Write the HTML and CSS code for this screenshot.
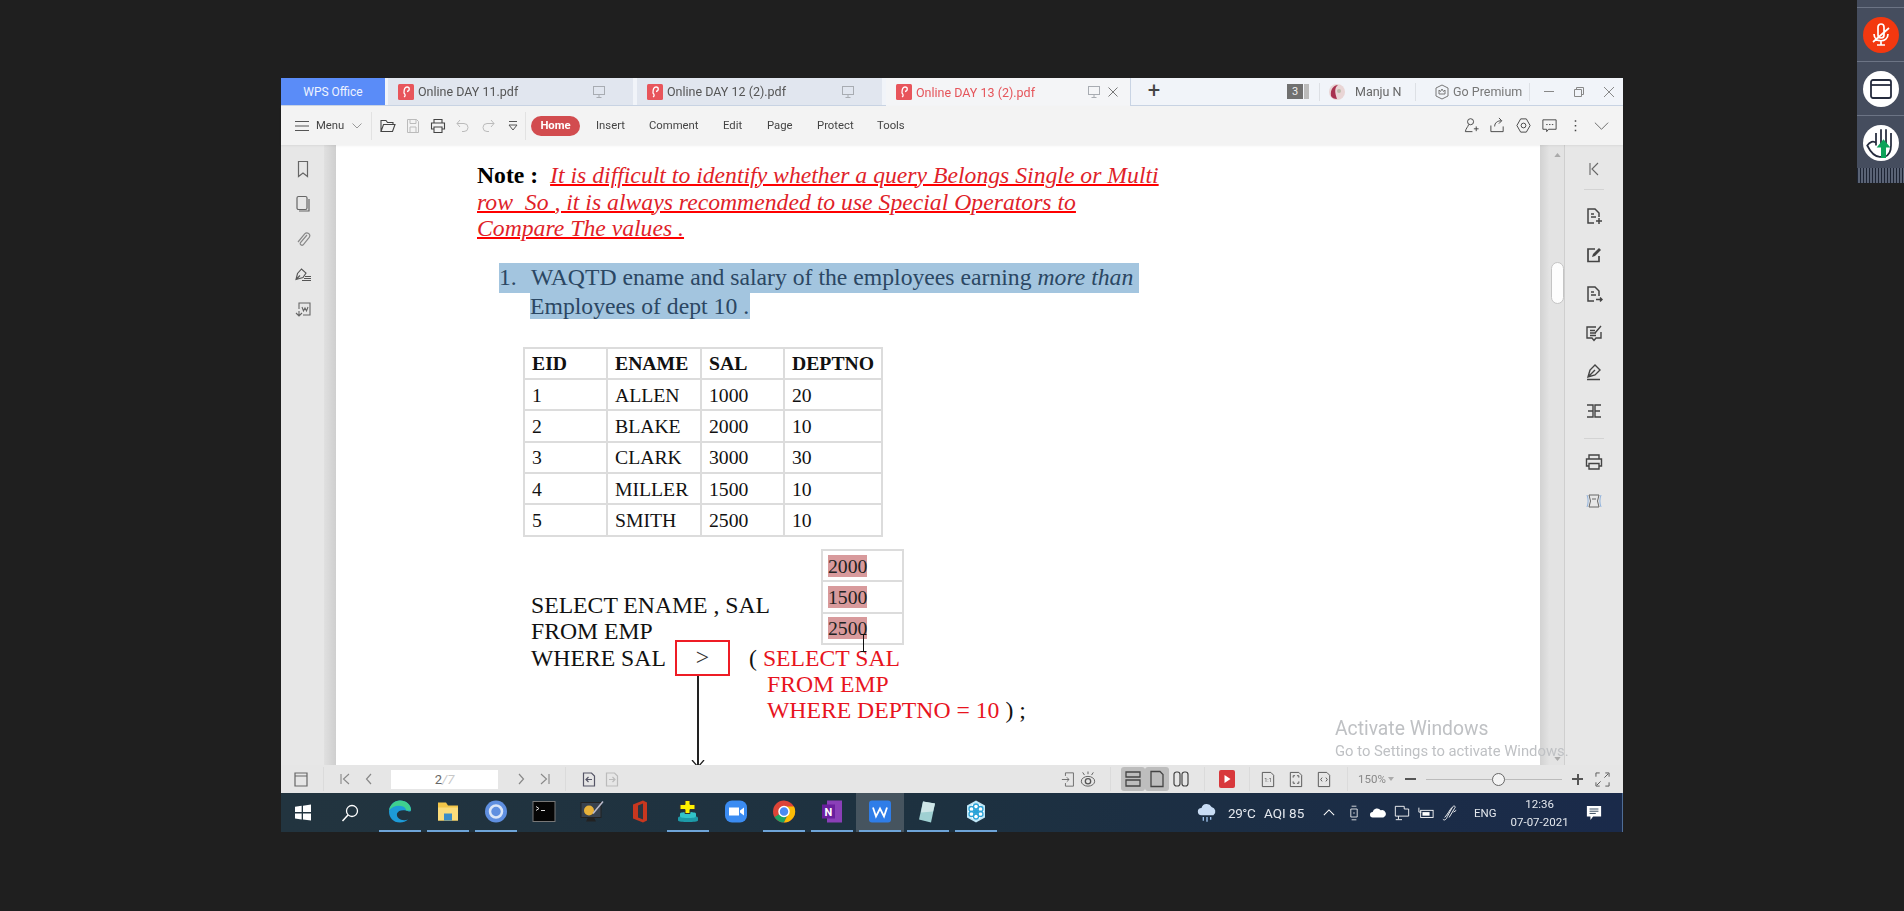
FILE: index.html
```html
<!DOCTYPE html>
<html lang="en">
<head>
  <meta charset="UTF-8" />
  <title>Online DAY 13 (2).pdf - WPS Office</title>
  <link rel="stylesheet" href="styles.css">
</head>
<body>
  <svg class="defs" width="0" height="0">
    <symbol id="pdf" viewBox="0 0 16 16"><rect width="16" height="16" rx="1.5" fill="#e8555b"/><path d="M6 13c2-1 1-3 0-4 0-3 0-6 3-6 3 0 3 4 0 4.500" fill="none" stroke="#fff" stroke-width="1.300"/></symbol>
    <symbol id="mon" viewBox="0 0 14 14"><rect x="1.500" y="1.500" width="11" height="8" fill="none" stroke="currentColor"/><path d="M7 10v2.500M4.500 12.500h5" stroke="currentColor"/></symbol>
    <symbol id="chev-l" viewBox="0 0 14 14"><path d="M9 2L4.500 7 9 12" fill="none" stroke="currentColor" stroke-width="1.200"/></symbol>
    <symbol id="chev-r" viewBox="0 0 14 14"><path d="M5 2l4.500 5L5 12" fill="none" stroke="currentColor" stroke-width="1.200"/></symbol>
    <symbol id="chev-first" viewBox="0 0 14 14"><path d="M3 2v10M11 2L5.500 7l5.500 5" fill="none" stroke="currentColor" stroke-width="1.100"/></symbol>
    <symbol id="chev-last" viewBox="0 0 14 14"><path d="M11 2v10M3 2l5.500 5L3 12" fill="none" stroke="currentColor" stroke-width="1.100"/></symbol>
  </svg>

  <main class="window">
    <div class="tabbar">
      <div class="tab-home">WPS Office</div>
      <div class="tab">
        <svg class="tab-pdf"><use href="#pdf"/></svg><span class="tab-name">Online DAY 11.pdf</span>
        <svg class="tab-mon"><use href="#mon"/></svg>
      </div>
      <div class="tab">
        <svg class="tab-pdf"><use href="#pdf"/></svg><span class="tab-name">Online DAY 12 (2).pdf</span>
        <svg class="tab-mon"><use href="#mon"/></svg>
      </div>
      <div class="tab tab-active">
        <svg class="tab-pdf"><use href="#pdf"/></svg><span class="tab-name">Online DAY 13 (2).pdf</span>
        <svg class="tab-mon"><use href="#mon"/></svg>
        <svg class="tab-close" viewBox="0 0 12 12"><path d="M1.500 1.500l9 9M10.500 1.500l-9 9" stroke="currentColor"/></svg>
      </div>
      <div class="tab-plus">+</div>
      <div class="tabbar-right">
        <span class="count">3</span>
        <span class="count-edge"></span>
        <span class="vsep"></span>
        <svg class="avatar" viewBox="0 0 16 16"><circle cx="8" cy="8" r="8" fill="#e9d5d5"/><path d="M2 12C1 5 5 1 9 1 5 4 6 9 8 15 5 15 3 14 2 12z" fill="#a8324f"/><circle cx="10" cy="7" r="2" fill="#bba"/></svg>
        <span class="user">Manju N</span>
        <span class="vsep vsep-user"></span>
        <svg class="crown" viewBox="0 0 16 16"><path d="M8 1l6 3v8l-6 3-6-3V4z" fill="none" stroke="#777"/><path d="M5 10V6l1.500 1.500L8 5l1.500 2.500L11 6v4z" fill="none" stroke="#777"/></svg>
        <span class="premium">Go Premium</span>
        <span class="vsep vsep-prem"></span>
        <span class="win-min"></span>
        <svg class="win-max" viewBox="0 0 12 12"><path d="M1.500 3.500h7v7h-7zM3.500 3.500v-2h7v7h-2" fill="none" stroke="#888"/></svg>
        <svg class="win-close" viewBox="0 0 12 12"><path d="M1 1l10 10M11 1L1 11" stroke="#888"/></svg>
      </div>
    </div>

    <div class="toolbar">
      <svg class="menu-ico" viewBox="0 0 14 12"><path d="M0 1.500h14M0 6h14M0 10.500h14" stroke="#555" stroke-width="1.200"/></svg>
      <span class="menu-label">Menu</span>
      <svg class="menu-chev" viewBox="0 0 10 6"><path d="M.5.500L5 5 9.500.5" fill="none" stroke="#999"/></svg>
      <span class="tool-sep"></span>
      <div class="quick">
        <svg viewBox="0 0 16 16"><path d="M1 13.500v-11h5l1.500 2H13v2M1 13.500h11.500L15 6.500H3.500z" fill="none" stroke="#444" stroke-width="1.100"/></svg>
        <svg viewBox="0 0 16 16"><path d="M2.500 1.500h9l2 2v11h-11zM5 1.500v4h6v-4M5 14v-5h6v5" fill="none" stroke="#bbb"/></svg>
        <svg viewBox="0 0 16 16"><path d="M4 5V1.500h8V5M4 11H1.500V5h13v6H12M4 9h8v5.500H4z" fill="none" stroke="#444" stroke-width="1.100"/></svg>
        <svg viewBox="0 0 16 16"><path d="M5 2L2 5.500 5 9M2 5.500h7a3.500 3.500 0 0 1 0 8H7" fill="none" stroke="#bbb"/></svg>
        <svg viewBox="0 0 16 16"><path d="M11 2l3 3.500L11 9M14 5.500H7a3.500 3.500 0 0 0 0 8h2" fill="none" stroke="#bbb"/></svg>
        <svg viewBox="0 0 16 16"><path d="M4 3.500h8M4 7l4 5 4-5z" fill="none" stroke="#555"/></svg>
      </div>
      <span class="tool-sep tool-sep-b"></span>
      <nav class="ribbon">
        <span class="rib-home">Home</span>
        <span class="rib rib-insert">Insert</span>
        <span class="rib rib-comment">Comment</span>
        <span class="rib rib-edit">Edit</span>
        <span class="rib rib-page">Page</span>
        <span class="rib rib-protect">Protect</span>
        <span class="rib rib-tools">Tools</span>
      </nav>
      <div class="tool-right">
        <svg viewBox="0 0 18 18"><circle cx="8" cy="5" r="3.200" fill="none" stroke="#444"/><path d="M6 8c-1 3-3 4-3.500 7.500H10M14 10v5M11.500 12.500h5" fill="none" stroke="#444"/></svg>
        <svg viewBox="0 0 18 18"><path d="M2 9v6.500h13V10M6 10c0-4 3-6 7-6M10.500 1l3 3-3 3" fill="none" stroke="#444"/></svg>
        <svg viewBox="0 0 18 18"><path d="M6 2h6l4 7-4 7H6L2 9z" fill="none" stroke="#444"/><circle cx="9" cy="9" r="2.500" fill="none" stroke="#444"/></svg>
        <svg viewBox="0 0 18 18"><path d="M2 3h14v10H8l-2 2.500V13H2z" fill="none" stroke="#444"/><path d="M5.500 8h1.500M8.500 8H10M11.500 8H13" stroke="#444"/></svg>
        <svg viewBox="0 0 18 18"><path d="M9 3.500v1.500M9 8.500V10M9 13.500V15" stroke="#444" stroke-width="1.600"/></svg>
        <svg viewBox="0 0 18 18"><path d="M2 6l7 7 7-7" fill="none" stroke="#666"/></svg>
      </div>
    </div>

    <div class="workspace">
      <aside class="side-left">
        <svg viewBox="0 0 16 18"><path d="M3.500 1.500h9v15L8 13l-4.500 3.500z" fill="none" stroke="#666" stroke-width="1.200"/></svg>
        <svg viewBox="0 0 16 18"><rect x="2" y="1.500" width="10" height="13" rx="1.500" fill="none" stroke="#666" stroke-width="1.200"/><path d="M14 4v12H4" fill="none" stroke="#666" stroke-width="1.200"/></svg>
        <svg viewBox="0 0 16 18"><path d="M12 5L5.500 12.500a1.800 1.800 0 0 0 2.700 2.300l6-7.500c2-3-2-6-4.500-3.500L3 12" fill="none" stroke="#888" stroke-width="1.200"/></svg>
        <svg viewBox="0 0 16 18"><path d="M1 14.500l1.500-6L6.500 4l4.500 4-3 4.500zM1 14.500l4-4M10 11.500h6M9 13.500h7M7 15.500h9" fill="none" stroke="#555" stroke-width="1.100"/></svg>
        <svg viewBox="0 0 16 18"><path d="M4 9V3h11v12H8M1 13l3 3 3-3M4 16v-5M7 7l1.500 4L10 8l1.500 3L13 7" fill="none" stroke="#666" stroke-width="1.100"/></svg>
      </aside>
      <div class="gutter-left"></div>

      <section class="page">
        <p class="note"><b>Note :</b> <u>It is difficult to identify whether a query Belongs Single or Multi<br>row&nbsp; So , it is always recommended to use Special Operators to<br>Compare The values .</u></p>

        <div class="selection">
          <div class="sel-line sel-first"><span class="sel-num">1.</span><span>WAQTD ename and salary of the employees earning <i>more than</i></span></div>
          <div class="sel-line sel-second">Employees of dept 10 .</div>
        </div>

        <table class="emp">
          <thead>
            <tr><th>EID</th><th>ENAME</th><th>SAL</th><th>DEPTNO</th></tr>
          </thead>
          <tbody>
            <tr><td>1</td><td>ALLEN</td><td>1000</td><td>20</td></tr>
            <tr><td>2</td><td>BLAKE</td><td>2000</td><td>10</td></tr>
            <tr><td>3</td><td>CLARK</td><td>3000</td><td>30</td></tr>
            <tr><td>4</td><td>MILLER</td><td>1500</td><td>10</td></tr>
            <tr><td>5</td><td>SMITH</td><td>2500</td><td>10</td></tr>
          </tbody>
        </table>

        <div class="sql">
          <div class="query">
            <div>SELECT ENAME , SAL</div>
            <div>FROM EMP</div>
            <div class="where-row">
              <span class="where">WHERE SAL</span>
              <span class="op">&gt;
                <span class="op-arrow">
                  <svg class="op-head" viewBox="0 0 14 8"><path d="M1 0l6 7 6-7" fill="none" stroke="#222" stroke-width="1.300"/></svg>
                </span>
              </span>
              <span class="paren">(</span>
              <span class="red sub-first">SELECT SAL</span>
            </div>
            <div class="red sub">FROM EMP</div>
            <div class="sub"><span class="red">WHERE DEPTNO = 10</span> ) ;</div>
          </div>
          <table class="sal">
            <tr><td><mark>2000</mark></td></tr>
            <tr><td><mark>1500</mark></td></tr>
            <tr><td><mark>2500</mark></td></tr>
          </table>
        </div>
        <svg class="ibeam" viewBox="0 0 7 18"><path d="M.5.500h6M3.500.5v17M.5 17.500h6" stroke="#111"/></svg>
      </section>

      <div class="gutter-right">
        <svg class="scroll-up" viewBox="0 0 8 5"><path d="M4 0l4 5H0z" fill="#aaa"/></svg>
        <div class="thumb"></div>
        <svg class="scroll-down" viewBox="0 0 8 5"><path d="M4 5l4-5H0z" fill="#aaa"/></svg>
      </div>
      <aside class="side-right">
        <svg class="r-collapse" viewBox="0 0 18 18"><path d="M5 3v12M13 3L7 9l6 6" fill="none" stroke="#666" stroke-width="1.100"/></svg>
        <span class="r-div"></span>
        <svg viewBox="0 0 18 18"><path d="M9 16H3V2h7l4 4v4M6 7h3M6 10h5M14 11v6M11 14h6" fill="none" stroke="#444" stroke-width="1.500"/></svg>
        <svg viewBox="0 0 18 18"><path d="M14 10v5.500H3V3h7" fill="none" stroke="#444" stroke-width="1.700"/><path d="M7 11l1-3 6-6 2 2-6 6z" fill="#444"/></svg>
        <svg viewBox="0 0 18 18"><path d="M9 16H3V2h7l4 4v5M6 7h3M6 10h5M11 14.500h6M15 12.500l2 2-2 2" fill="none" stroke="#444" stroke-width="1.500"/></svg>
        <svg viewBox="0 0 18 18"><path d="M16 8v6H11l-2 2.500L7 14H2V3h9M5 6.500h5M5 9h6M5 11.500h6M10 9l6-7" fill="none" stroke="#444" stroke-width="1.400"/></svg>
        <svg viewBox="0 0 18 18"><path d="M3 14l2-7 5-5 5 5-5 5zM10 7l-7 7M2 16.500h13" fill="none" stroke="#444" stroke-width="1.400"/></svg>
        <svg viewBox="0 0 18 18"><path d="M2 3h6v12H2M3 9h5M16 3h-6v12h6M15 9h-5" fill="none" stroke="#444" stroke-width="1.400"/></svg>
        <span class="r-div r-div-b"></span>
        <svg viewBox="0 0 18 18"><path d="M4 6V2h10v4M4 13H1.500V6h15v7H14M4 10.500h10V16H4z" fill="none" stroke="#444" stroke-width="1.400"/></svg>
        <svg viewBox="0 0 18 18"><path d="M4 3h10l-1.500 6 1.500 6H4l1.500-6z" fill="none" stroke="#666"/><path d="M2 3c1.500 4 1.500 8 0 12M16 3c-1.500 4-1.500 8 0 12" fill="none" stroke="#8fb2dd"/><path d="M7 7h4" stroke="#666"/></svg>
      </aside>
    </div>

    <div class="statusbar">
      <svg class="st-ico st-panel" viewBox="0 0 16 16"><path d="M2 1.500h12v13H2zM2 4.500h12" fill="none" stroke="#666" stroke-width="1.200"/></svg>
      <span class="st-sep st-sep-a"></span>
      <div class="pager">
        <svg><use href="#chev-first"/></svg>
        <svg><use href="#chev-l"/></svg>
      </div>
      <div class="page-input">2<span>/7</span></div>
      <div class="pager pager-next">
        <svg><use href="#chev-r"/></svg>
        <svg><use href="#chev-last"/></svg>
      </div>
      <span class="st-sep st-sep-b"></span>
      <svg class="st-ico st-back" viewBox="0 0 16 16"><path d="M2.500 1.500h8l3 3v10h-11zM11 8H5M7.500 5.500L5 8l2.500 2.500" fill="none" stroke="#556" stroke-width="1.200"/></svg>
      <svg class="st-ico st-fwd" viewBox="0 0 16 16"><path d="M2.500 1.500h8l3 3v10h-11zM5 8h6M8.500 5.500L11 8l-2.500 2.500" fill="none" stroke="#bbb" stroke-width="1.200"/></svg>

      <div class="st-right">
        <svg class="st-ico" viewBox="0 0 18 18"><path d="M5 5V1.500h9v15H5V13M1 9h8M6.500 6.500L9 9l-2.500 2.500" fill="none" stroke="#666"/></svg>
        <svg class="st-ico st-eye" viewBox="0 0 18 18"><ellipse cx="9" cy="11" rx="7.500" ry="5.500" fill="none" stroke="#555"/><circle cx="9" cy="11" r="3" fill="none" stroke="#555" stroke-width="1.500"/><path d="M3 1l2 3M9 0v3M15 1l-2 3" stroke="#555"/></svg>
        <span class="st-sep"></span>
        <span class="view-btn view-on"><svg viewBox="0 0 18 18"><path d="M2 2h14v5H2zM2 10h14v6H2z" fill="none" stroke="#444" stroke-width="1.300"/></svg></span>
        <span class="view-btn view-on"><svg viewBox="0 0 18 18"><path d="M3 1.500h9l3 3v12H3z" fill="none" stroke="#444" stroke-width="1.300"/></svg></span>
        <span class="view-btn"><svg viewBox="0 0 18 18"><rect x="2" y="2" width="6" height="14" rx="2.500" fill="none" stroke="#444" stroke-width="1.200"/><rect x="10" y="2" width="6" height="14" rx="2.500" fill="none" stroke="#444" stroke-width="1.200"/></svg></span>
        <span class="st-sep st-sep-c"></span>
        <svg class="st-play" viewBox="0 0 16 18"><rect width="16" height="18" rx="2" fill="#d8383c"/><path d="M5.500 5l6 4-6 4z" fill="#fff"/></svg>
        <span class="st-sep st-sep-d"></span>
        <svg class="st-ico" viewBox="0 0 16 18"><path d="M2 1.500h9l3 3v12H2z" fill="none" stroke="#555"/><text x="8" y="12" text-anchor="middle" class="fit">1:1</text></svg>
        <svg class="st-ico st-fit" viewBox="0 0 16 18"><path d="M2 1.500h9l3 3v12H2zM5 7v-2h2M11 11v2H9M5 11v2h2M11 7V5H9" fill="none" stroke="#555"/></svg>
        <svg class="st-ico st-fit" viewBox="0 0 16 18"><path d="M2 1.500h9l3 3v12H2zM6 7L4.500 9 6 11M10 7l1.500 2L10 11" fill="none" stroke="#555"/></svg>
        <span class="st-sep st-sep-e"></span>
        <span class="zoom-val">150%</span>
        <span class="zoom-drop"></span>
        <span class="zoom-minus"></span>
        <div class="slider"><span class="knob"></span></div>
        <span class="zoom-plus"></span>
        <svg class="st-ico st-full" viewBox="0 0 16 16"><path d="M1 5V1h4M11 1h4v4M15 11v4h-4M5 15H1v-4M2 14l4-4M14 2l-4 4" fill="none" stroke="#555"/></svg>
      </div>
    </div>

    <footer class="taskbar">
      <svg class="task-win" viewBox="0 0 18 18"><path d="M0 2.500l7.500-1V8.500H0zM9 1.300L18 0v8.500H9zM0 10h7.500v6.800L0 15.700zM9 10h9v8l-9-1.200z" fill="#fff"/></svg>
      <svg class="task-search" viewBox="0 0 18 18"><circle cx="11" cy="7" r="5.500" fill="none" stroke="#fff" stroke-width="1.300"/><path d="M7 11L1.500 17" stroke="#fff" stroke-width="1.500"/></svg>
      <div class="apps">
        <span class="app app-run"><svg viewBox="0 0 24 24"><path d="M12 1a11 11 0 0 0-11 11c0 6 4 11 11 11 3 0 6-1 8-3-6 2-12-1-11-6 1-3 5-4 9-3 3 1 5 2 5-1C23 5 18 1 12 1z" fill="#1d9bd8"/><path d="M12 1C7 1 2 5 1 11c3-4 9-6 14-4 2 1 3 2 3 4h5C23 5 18 1 12 1z" fill="#3fcf8e"/></svg></span>
        <span class="app app-run"><svg viewBox="0 0 24 24"><path d="M2 3h8l2 3h10v15H2z" fill="#f3c649"/><path d="M2 8h20v13H2z" fill="#fbdc7a"/><rect x="8" y="14" width="8" height="7" fill="#3b8dc7"/></svg></span>
        <span class="app app-run"><svg viewBox="0 0 24 24"><circle cx="12" cy="12" r="11" fill="#5f8fe0"/><circle cx="12" cy="12" r="6" fill="none" stroke="#dbe6f7" stroke-width="2.500"/></svg></span>
        <span class="app"><svg viewBox="0 0 24 24"><rect x="1" y="2" width="22" height="20" fill="#050505" stroke="#777"/><path d="M4 7l3 2-3 2M9 11h4" stroke="#ddd" fill="none"/></svg></span>
        <span class="app"><svg viewBox="0 0 24 24"><rect x="1" y="3" width="20" height="15" fill="#38424f" stroke="#222"/><circle cx="9" cy="11" r="5" fill="#e8b23a"/><path d="M13 14L23 2" stroke="#bbc" stroke-width="1.500"/><path d="M8 18h6l2 4H6z" fill="#222"/></svg></span>
        <span class="app"><svg viewBox="0 0 24 24"><path d="M5 5l10-4 4 2v18l-4 2-10-4z" fill="#c8371f"/><path d="M10 6l5-2v16l-5-2z" fill="#2a3540"/></svg></span>
        <span class="app app-run"><svg viewBox="0 0 24 24"><path d="M2 18c0-2 20-2 20 0v3c0 2-20 2-20 0z" fill="#1d9aa8"/><path d="M4 14c0-2 16-2 16 0v3c0 2-16 2-16 0z" fill="#31c4c9"/><path d="M9 1h5v4h5v5h-5v4H9v-4H4V5h5z" fill="#fff200" stroke="#333"/></svg></span>
        <span class="app"><svg viewBox="0 0 24 24"><rect x="1" y="1" width="22" height="22" rx="7" fill="#3b8cf2"/><path d="M5 8h10v8H5zM16 11l4-3v8l-4-3z" fill="#fff"/></svg></span>
        <span class="app app-run"><svg viewBox="0 0 24 24"><circle cx="12" cy="12" r="11" fill="#dc4437"/><path d="M12 12L2.500 17.500A11 11 0 0 0 12 23l5-11z" fill="#1fa463"/><path d="M12 7h10a11 11 0 0 1-10 16l5-10z" fill="#fbbc05"/><circle cx="12" cy="12" r="5" fill="#4a8af4" stroke="#fff" stroke-width="1.500"/></svg></span>
        <span class="app app-run"><svg viewBox="0 0 24 24"><rect x="7" y="1" width="15" height="22" fill="#8a3fb8"/><rect x="2" y="5" width="13" height="14" fill="#6a1f9e"/><text x="8.500" y="16" text-anchor="middle" class="one">N</text></svg></span>
        <span class="app app-run app-active"><svg viewBox="0 0 24 24"><rect x="1" y="1" width="22" height="22" rx="3" fill="#2f7de8"/><path d="M5 8l3 9 4-8 4 8 3-9" fill="none" stroke="#fff" stroke-width="1.800"/></svg></span>
        <span class="app app-run"><svg viewBox="0 0 24 24"><path d="M7 2l12 2-4 19-12-3z" fill="#9fd0d2"/><path d="M7 2l12 2-2 8-12 1z" fill="#cfe6e8"/></svg></span>
        <span class="app app-run"><svg viewBox="0 0 24 24"><path d="M12 1l9 5v12l-9 5-9-5V6z" fill="#bfe7f7"/><circle cx="12" cy="12" r="8" fill="#fff"/><circle cx="12" cy="12" r="2.500" fill="#2aa3d8"/><g fill="none" stroke="#2aa3d8" stroke-width="1.300"><circle cx="12" cy="7" r="2.500"/><circle cx="12" cy="17" r="2.500"/><circle cx="7.500" cy="9.500" r="2.500"/><circle cx="16.500" cy="9.500" r="2.500"/><circle cx="7.500" cy="14.500" r="2.500"/><circle cx="16.500" cy="14.500" r="2.500"/></g></svg></span>
      </div>
      <div class="tray">
        <svg class="tray-cloud" viewBox="0 0 24 22"><path d="M6 14a4 4 0 0 1 0-8 6 6 0 0 1 11-1 5 5 0 0 1 2 9z" fill="#c8dcf4"/><path d="M8 16v4M12 16v5M16 16v3" stroke="#9cc0ea" stroke-width="1.500"/></svg>
        <span class="temp">29°C</span>
        <span class="aqi">AQI 85</span>
        <svg class="tray-up" viewBox="0 0 14 8"><path d="M1 7l6-6 6 6" fill="none" stroke="#fff" stroke-width="1.200"/></svg>
        <svg class="tray-i" viewBox="0 0 14 20"><path d="M4 1.500h6M3 5h8v10H3zM6 10h2M4 18.500h6" fill="none" stroke="#fff"/></svg>
        <svg class="tray-i" viewBox="0 0 18 14"><path d="M3 12a3 3 0 0 1 0-6 5 5 0 0 1 9-2 4 4 0 0 1 3 8z" fill="#fff"/></svg>
        <svg class="tray-i" viewBox="0 0 18 18"><path d="M1.500 1.500h10v3h5v8h-15zM5 12.500V16M2 16.500h7" fill="none" stroke="#fff"/></svg>
        <svg class="tray-i" viewBox="0 0 18 14"><rect x="3" y="4" width="14" height="8" fill="none" stroke="#fff"/><rect x="5" y="6" width="8" height="4" fill="#fff"/><path d="M1 1v5h3" fill="none" stroke="#fff"/></svg>
        <svg class="tray-i" viewBox="0 0 18 18"><path d="M1 16c2 2 4 0 5-3l6-11c2-2 4 0 2 2L8 14M3 14c3-3 6-9 8-11M13 8l3-2" fill="none" stroke="#fff"/></svg>
        <span class="lang">ENG</span>
        <div class="clock"><span>12:36</span><span>07-07-2021</span></div>
        <svg class="tray-note" viewBox="0 0 18 18"><path d="M1 1h16v12H8l-3 4v-4H1z" fill="#fff"/><path d="M4 4.500h10M4 7h10M4 9.500h7" stroke="#24384f"/></svg>
      </div>
    </footer>

    <div class="activate">
      <div class="act-title">Activate Windows</div>
      <div class="act-sub">Go to Settings to activate Windows.</div>
    </div>
  </main>

  <aside class="meeting">
    <div class="meet-cell"><span class="meet-btn meet-red"><svg viewBox="0 0 24 24"><path d="M9 4a3 3 0 0 1 6 0v8a3 3 0 0 1-6 0zM5 11c0 9 14 9 14 0M12 18v4M8 22h8M4 19L20 5" fill="none" stroke="#fff" stroke-width="1.700"/></svg></span></div>
    <div class="meet-cell"><span class="meet-btn"><svg viewBox="0 0 24 24"><rect x="2" y="3" width="20" height="18" rx="2" fill="none" stroke="#252b3d" stroke-width="1.800"/><path d="M2 8h20" stroke="#252b3d" stroke-width="1.800"/></svg></span></div>
    <div class="meet-cell"><span class="meet-btn"><svg class="hand" viewBox="0 0 24 24"><path d="M8 14V4M12 14V1M16 14V1M20 14V4M8 12c-2-2-5-1-7 2 2 4 5 9 10 9h4c3-1 5-4 5-9" fill="none" stroke="#252b3d" stroke-width="1.400"/><path d="M14 9l5.500 6.500H16V24h-4v-8.500H8.500z" fill="#0da35a"/></svg></span></div>
    <div class="meet-grip"></div>
  </aside>
</body>
</html>
```

FILE: styles.css
```css
* {
  box-sizing: border-box;
}

html, body {
  height: 911px;
  overflow: hidden;
}

body {
  margin: 0;
  background: #1f1f1f;
  padding: 78px 0 0 281px;
  font-family: Roboto, "Noto Sans", sans-serif;
  color: #444;
}

.defs {
  display: block;
  height: 0;
  position: absolute;
}

svg {
  flex: none;
  display: block;
}

.window {
  position: relative;
  width: 1342px;
  height: 754px;
  display: flex;
  flex-direction: column;
  filter: blur(0.4px);
}

/* tabs */
.tabbar {
  height: 28px;
  display: flex;
  background: #f1f4f9;
  border-bottom: 1px solid #c9d4e4;
  font-size: 12.5px;
  white-space: nowrap;
}

.tab-home {
  width: 104px;
  background: #5a8cf8;
  color: #eef3ff;
  display: flex;
  align-items: center;
  justify-content: center;
  font-size: 12px;
  margin-right: 3px;
}

.tab {
  width: 245px;
  margin-right: 4px;
  background: #e1e6ef;
  display: flex;
  align-items: center;
  padding-left: 10px;
  color: #555;
  position: relative;
}

.tab-pdf {
  width: 16px;
  height: 16px;
  margin-right: 4px;
}

.tab-name {
  width: 174px;
}

.tab-mon {
  width: 14px;
  height: 14px;
  color: #a8acb2;
}

.tab-active {
  width: 245px;
  margin-right: 0;
  background: #f4f5f7;
  color: #e5545a;
  border-right: 1px solid #c9d4e4;
  height: 28px;
}

.tab-active .tab-mon {
  margin-left: -3px;
}

.tab-close {
  width: 12px;
  height: 12px;
  margin-left: 6px;
  color: #777;
}

.tab-plus {
  width: 46px;
  text-align: center;
  font-size: 22px;
  line-height: 25px;
  color: #444;
}

.tabbar-right {
  flex: 1;
  display: flex;
  align-items: center;
  position: relative;
  color: #666;
}

.count {
  width: 16px;
  height: 15px;
  margin-left: 110px;
  background: #707070;
  color: #eee;
  font-size: 11px;
  text-align: center;
  line-height: 15px;
}

.count-edge {
  width: 5px;
  height: 15px;
  margin-left: 1px;
  background: #bbb;
}

.vsep {
  width: 1px;
  height: 18px;
  margin-left: 10px;
  background: #dde0e5;
}

.avatar {
  width: 16px;
  height: 16px;
  margin: 0 10px 0 9px;
}

.user {
  width: 46px;
}

.vsep-user {
  margin-left: 14px;
}

.crown {
  width: 16px;
  height: 16px;
  margin: 0 1px 0 18px;
}

.premium {
  width: 66px;
  margin-left: 2px;
  color: #777;
}

.vsep-prem {
  margin-left: 10px;
}

.win-min {
  width: 10px;
  height: 1px;
  margin-left: 14px;
  background: #888;
}

.win-max {
  width: 12px;
  height: 12px;
  margin-left: 19px;
}

.win-close {
  width: 12px;
  height: 12px;
  margin-left: 18px;
}

/* toolbar */
.toolbar {
  height: 39px;
  display: flex;
  align-items: center;
  background: #f3f3f3;
  padding-left: 14px;
  font-size: 11.3px;
  box-shadow: 0 1px 2px rgba(0, 0, 0, 0.06);
  position: relative;
  z-index: 1;
}

.menu-ico {
  width: 14px;
  height: 12px;
}

.menu-label {
  width: 30px;
  margin-left: 7px;
}

.menu-chev {
  width: 10px;
  height: 6px;
  margin-left: 6px;
}

.tool-sep {
  width: 1px;
  height: 28px;
  margin-left: 9px;
  background: #e2e2e2;
}

.quick {
  display: flex;
  margin-left: 8px;
  gap: 9px;
}

.quick svg {
  width: 16px;
  height: 16px;
}

.tool-sep-b {
  margin-left: 4px;
}

.ribbon {
  display: flex;
  align-items: center;
}

.rib-home {
  width: 49px;
  height: 20px;
  margin-left: 5px;
  border-radius: 10px;
  background: #d24c4f;
  color: #fff;
  text-align: center;
  line-height: 20px;
  font-weight: 700;
}

.rib-insert { margin-left: 16px; width: 28px; }
.rib-comment { margin-left: 25px; width: 49px; }
.rib-edit { margin-left: 25px; width: 20px; }
.rib-page { margin-left: 24px; width: 24px; }
.rib-protect { margin-left: 26px; width: 35px; }
.rib-tools { margin-left: 25px; width: 27px; }

.tool-right {
  margin-left: auto;
  display: flex;
  gap: 9px;
  padding-right: 13px;
}

.tool-right svg {
  width: 17px;
  height: 17px;
}

/* main area */
.workspace {
  height: 620px;
  display: flex;
  position: relative;
  overflow: hidden;
}

.side-left {
  width: 43px;
  background: #e7e7e7;
  display: flex;
  flex-direction: column;
  align-items: center;
  padding-top: 15px;
  gap: 17px;
}

.side-left svg {
  width: 16px;
  height: 18px;
}

.gutter-left {
  width: 12px;
  background: linear-gradient(to right, #e0e0e0, #cfcfcf);
}

.page {
  width: 1204px;
  background: #fff;
  padding: 17px 0 0 141px;
  font-family: "Liberation Serif", serif;
  font-size: 23.7px;
  line-height: 26.5px;
  color: #111;
  position: relative;
  white-space: nowrap;
  overflow: hidden;
}

.note {
  margin: 0;
  color: #e01f2a;
  font-style: italic;
}

.note u {
  text-decoration-color: #f00;
  text-decoration-thickness: 2px;
}

.note b {
  font-style: normal;
  color: #000;
  margin-right: 6px;
}

.selection {
  margin: 21px 0 0 22px;
  color: #2b4763;
}

.sel-line {
  background: #a3c5df;
}

.sel-first {
  width: 640px;
  height: 30px;
  display: flex;
  align-items: center;
}

.sel-num {
  width: 32px;
}

.sel-second {
  width: 220px;
  height: 26px;
  margin-left: 31px;
}

.emp {
  margin: 28px 0 0 46px;
  border-collapse: collapse;
  table-layout: fixed;
  width: 358px;
  font-size: 19.7px;
  line-height: 22px;
}

.emp th, .emp td {
  border: 2px solid #dcdcdc;
  height: 31.4px;
  padding: 0 0 0 7px;
  text-align: left;
}

.emp th:nth-child(1) { width: 83px; }
.emp th:nth-child(2) { width: 94px; }
.emp th:nth-child(3) { width: 83px; }
.emp th:nth-child(4) { width: 98px; }

.sql {
  display: flex;
  margin: 12px 0 0 54px;
  align-items: flex-start;
}

.query {
  width: 290px;
  padding-top: 43px;
  flex: none;
}

.where-row {
  display: flex;
  align-items: center;
  height: 26px;
}

.where {
  width: 135px;
  flex: none;
}

.op {
  width: 55px;
  height: 36px;
  flex: none;
  margin: 0 0 0 9px;
  border: 2px solid #ee1c25;
  text-align: center;
  line-height: 30px;
  color: #333;
  position: relative;
}

.op-arrow {
  position: absolute;
  left: 20px;
  top: 34px;
  width: 2px;
  height: 90px;
  background: #222;
}

.op-head {
  position: absolute;
  left: -6px;
  top: 84px;
  width: 14px;
  height: 8px;
}

.paren {
  margin-left: 19px;
}

.red {
  color: #e8141e;
}

.sub-first {
  margin-left: 6px;
}

.sub {
  margin-left: 236px;
}

.sal {
  border-collapse: collapse;
  width: 83px;
  font-size: 19.7px;
  line-height: 22px;
}

.sal td {
  border: 2px solid #dcdcdc;
  height: 31.4px;
  padding: 0 0 0 5px;
}

.sal mark {
  background: #d89a9c;
  color: #222;
}

.ibeam {
  position: absolute;
  left: 524px;
  top: 489px;
  width: 7px;
  height: 18px;
}

.gutter-right {
  width: 25px;
  background: linear-gradient(to right, #d2d2d2, #e3e3e3 40%, #e3e3e3);
  border-right: 1px solid #cfcfcf;
  position: relative;
  display: flex;
  flex-direction: column;
  align-items: center;
  padding: 8px 0 0 10px;
}

.scroll-up {
  width: 7px;
  height: 4px;
}

.thumb {
  width: 13px;
  height: 42px;
  margin-top: 105px;
  background: #fdfdfd;
  border: 1px solid #c4c4c4;
  border-radius: 7px;
}

.scroll-down {
  width: 7px;
  height: 4px;
  margin-top: auto;
  margin-bottom: 4px;
}

.side-right {
  width: 58px;
  background: #e7e7e7;
  display: flex;
  flex-direction: column;
  align-items: center;
  padding: 15px 0 0 0;
}

.side-right svg {
  width: 18px;
  height: 18px;
  margin-bottom: 21px;
}

.side-right .r-collapse {
  margin-bottom: 11px;
}

.r-div {
  width: 20px;
  height: 1px;
  background: #d3d3d3;
  margin-bottom: 17px;
}

.r-div-b {
  margin-top: -3px;
  margin-bottom: 14px;
}

/* status bar */
.statusbar {
  height: 28px;
  background: #e6e6e6;
  display: flex;
  align-items: center;
  padding-left: 12px;
  font-size: 11.5px;
}

.st-ico {
  width: 16px;
  height: 17px;
}

.st-sep {
  width: 1px;
  height: 24px;
  background: #dbdbdb;
}

.st-sep-a {
  margin-left: 14px;
}

.pager {
  display: flex;
  gap: 10px;
  margin-left: 14px;
  color: #888;
}

.pager svg {
  width: 14px;
  height: 14px;
}

.page-input {
  width: 107px;
  height: 19px;
  margin-left: 15px;
  background: #fff;
  text-align: center;
  font-size: 13px;
  line-height: 19px;
  color: #666;
}

.page-input span {
  color: #c8c8c8;
  font-style: italic;
}

.pager-next {
  margin-left: 16px;
}

.st-sep-b {
  margin-left: 13px;
}

.st-back {
  margin-left: 15px;
}

.st-fwd {
  margin-left: 7px;
  color: #bbb;
}

.st-right {
  margin-left: auto;
  display: flex;
  align-items: center;
  padding-right: 13px;
}

.st-eye {
  margin: 0 0 0 3px;
}

.st-right .st-sep {
  margin-left: 14px;
}

.view-btn {
  width: 24px;
  height: 24px;
  border-radius: 3px;
  display: flex;
  align-items: center;
  justify-content: center;
  margin-left: 0;
}

.st-right .st-sep + .view-btn {
  margin-left: 10px;
}

.view-btn svg {
  width: 18px;
  height: 18px;
}

.view-on {
  background: #bdbdbd;
}

.st-right .st-sep-c {
  margin-left: 11px;
}

.st-play {
  width: 16px;
  height: 18px;
  margin-left: 14px;
}

.st-right .st-sep-d {
  margin-left: 14px;
}

.st-sep-d + .st-ico {
  margin-left: 10px;
}

.st-fit {
  margin-left: 12px;
}

.fit {
  font-size: 6px;
  fill: #555;
}

.st-right .st-sep-e {
  margin-left: 15px;
}

.zoom-val {
  margin-left: 10px;
  width: 27px;
  color: #888;
}

.zoom-drop {
  margin-left: 3px;
  border: 3px solid transparent;
  border-top: 4px solid #aaa;
  border-bottom: 0;
}

.zoom-minus {
  width: 11px;
  height: 2px;
  margin-left: 11px;
  background: #555;
}

.slider {
  width: 136px;
  height: 1px;
  margin-left: 10px;
  background: #bbb;
  position: relative;
}

.knob {
  position: absolute;
  left: 66px;
  top: -6px;
  width: 13px;
  height: 13px;
  border-radius: 50%;
  border: 1px solid #666;
  background: #f4f4f4;
}

.zoom-plus {
  width: 11px;
  height: 11px;
  margin-left: 10px;
  background: linear-gradient(#555, #555) center / 100% 2px no-repeat,
    linear-gradient(#555, #555) center / 2px 100% no-repeat;
}

.st-full {
  margin-left: 12px;
  width: 15px;
  height: 15px;
}

/* taskbar */
.taskbar {
  height: 39px;
  margin-top: 0;
  background: linear-gradient(to right, #22343f, #1d3140 50%, #1a2a4a);
  border-right: 1px solid #4f6d96;
  display: flex;
  align-items: center;
  color: #e4e8ee;
  font-size: 13.5px;
  padding-left: 14px;
}

.task-win {
  width: 16px;
  height: 17px;
}

.task-search {
  width: 18px;
  height: 18px;
  margin-left: 30px;
}

.apps {
  display: flex;
  align-self: stretch;
  margin-left: 17px;
}

.app {
  width: 48px;
  display: flex;
  align-items: center;
  justify-content: center;
  border-bottom: 2px solid transparent;
  padding: 0 0 1px 0;
}

.app svg {
  width: 24px;
  height: 25px;
}

.app-run {
  border-image: linear-gradient(to right, transparent 4px, #6ea4d8 4px, #6ea4d8 44px, transparent 44px) 1;
}

.app-active {
  background: #46545f;
}

.one {
  font-size: 11px;
  font-weight: 700;
  fill: #fff;
  font-family: Roboto, sans-serif;
}

.tray {
  flex: 1;
  display: flex;
  align-items: center;
  padding-left: 0;
}

.tray-cloud {
  width: 22px;
  height: 21px;
  margin-left: 196px;
}

.temp {
  margin-left: 10px;
  width: 27px;
  letter-spacing: -0.4px;
  white-space: nowrap;
}

.aqi {
  margin-left: 9px;
  width: 42px;
  white-space: nowrap;
}

.tray-up {
  width: 12px;
  height: 7px;
  margin: 0 11px 0 17px;
}

.tray-i {
  width: 16px;
  height: 16px;
  margin-right: 8px;
}

.lang {
  margin-left: 8px;
  font-size: 11.5px;
}

.clock {
  margin-left: 13px;
  width: 60px;
  display: flex;
  flex-direction: column;
  align-items: center;
  font-size: 11.5px;
  line-height: 18px;
}

.tray-note {
  width: 16px;
  height: 16px;
  margin-left: 16px;
}

/* watermark */
.activate {
  position: absolute;
  left: 1054px;
  top: 639px;
  color: #bfc1c4;
  pointer-events: none;
  white-space: nowrap;
}

.act-title {
  font-size: 19.3px;
  line-height: 24px;
}

.act-sub {
  font-size: 14.8px;
  line-height: 20px;
}

/* meeting controls */
.meeting {
  position: absolute;
  right: 0;
  top: 0;
  width: 47px;
  height: 183px;
  background: #454d5e;
  padding-top: 7px;
}

.meet-cell {
  height: 54px;
  border-top: 1px solid #6c7485;
  display: flex;
  align-items: center;
  justify-content: center;
}

.meet-btn {
  width: 36px;
  height: 36px;
  border-radius: 50%;
  background: #fff;
  display: flex;
  align-items: center;
  justify-content: center;
}

.meet-btn svg {
  width: 24px;
  height: 24px;
}

.meet-btn .hand {
  width: 30px;
  height: 30px;
}

.meet-red {
  background: #f3380f;
}

.meet-grip {
  height: 15px;
  margin-top: -1px;
  background: repeating-linear-gradient(to right, #1d2433 0 1.5px, #5a6375 1.5px 3px);
}
```
